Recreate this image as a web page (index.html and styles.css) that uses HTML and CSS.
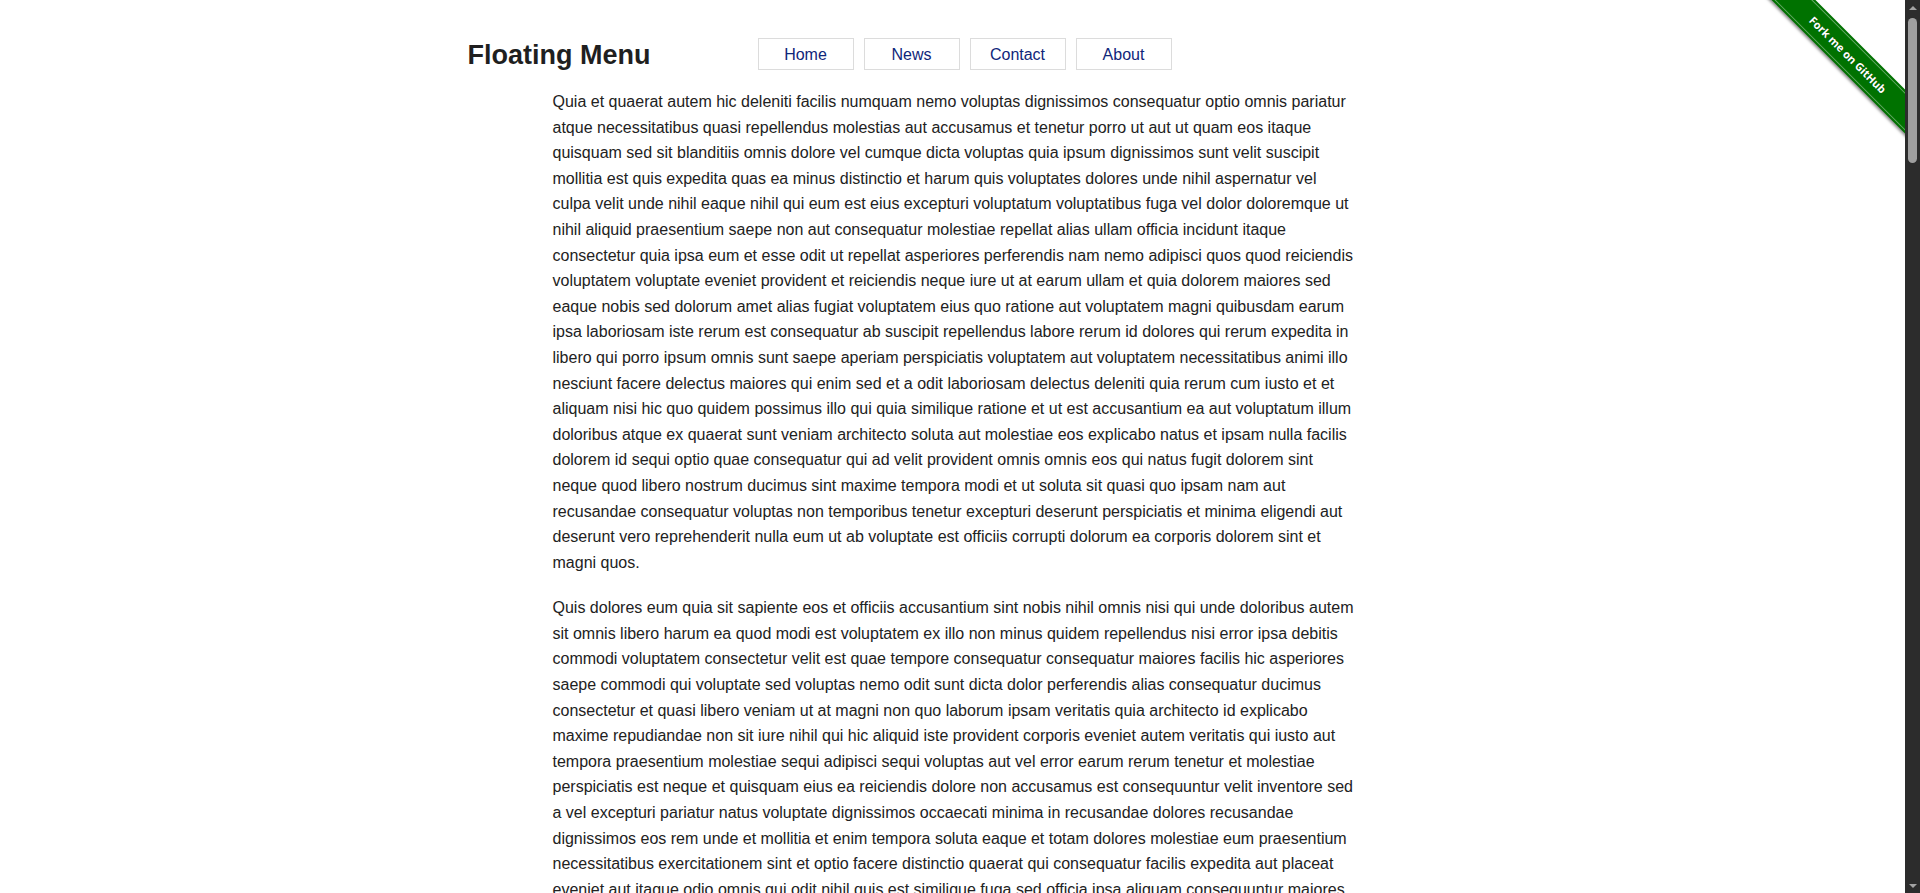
FILE: index.html
```html
<!DOCTYPE html>
<html lang="en">
<head>
<meta charset="utf-8">
<title>Floating Menu</title>
<link rel="stylesheet" href="styles.css">
</head>
<body>
<div class="app">
  <div class="viewport">
    <header class="topbar">
      <div class="topbar-inner">
        <h1 class="brand">Floating Menu</h1>
        <nav class="menu">
          <a class="menu-item" href="#">Home</a>
          <a class="menu-item" href="#">News</a>
          <a class="menu-item" href="#">Contact</a>
          <a class="menu-item" href="#">About</a>
        </nav>
      </div>
    </header>
    <main class="content">
      <p>Quia et quaerat autem hic deleniti facilis numquam nemo voluptas dignissimos consequatur optio omnis pariatur<br>
atque necessitatibus quasi repellendus molestias aut accusamus et tenetur porro ut aut ut quam eos itaque<br>
quisquam sed sit blanditiis omnis dolore vel cumque dicta voluptas quia ipsum dignissimos sunt velit suscipit<br>
mollitia est quis expedita quas ea minus distinctio et harum quis voluptates dolores unde nihil aspernatur vel<br>
culpa velit unde nihil eaque nihil qui eum est eius excepturi voluptatum voluptatibus fuga vel dolor doloremque ut<br>
nihil aliquid praesentium saepe non aut consequatur molestiae repellat alias ullam officia incidunt itaque<br>
consectetur quia ipsa eum et esse odit ut repellat asperiores perferendis nam nemo adipisci quos quod reiciendis<br>
voluptatem voluptate eveniet provident et reiciendis neque iure ut at earum ullam et quia dolorem maiores sed<br>
eaque nobis sed dolorum amet alias fugiat voluptatem eius quo ratione aut voluptatem magni quibusdam earum<br>
ipsa laboriosam iste rerum est consequatur ab suscipit repellendus labore rerum id dolores qui rerum expedita in<br>
libero qui porro ipsum omnis sunt saepe aperiam perspiciatis voluptatem aut voluptatem necessitatibus animi illo<br>
nesciunt facere delectus maiores qui enim sed et a odit laboriosam delectus deleniti quia rerum cum iusto et et<br>
aliquam nisi hic quo quidem possimus illo qui quia similique ratione et ut est accusantium ea aut voluptatum illum<br>
doloribus atque ex quaerat sunt veniam architecto soluta aut molestiae eos explicabo natus et ipsam nulla facilis<br>
dolorem id sequi optio quae consequatur qui ad velit provident omnis omnis eos qui natus fugit dolorem sint<br>
neque quod libero nostrum ducimus sint maxime tempora modi et ut soluta sit quasi quo ipsam nam aut<br>
recusandae consequatur voluptas non temporibus tenetur excepturi deserunt perspiciatis et minima eligendi aut<br>
deserunt vero reprehenderit nulla eum ut ab voluptate est officiis corrupti dolorum ea corporis dolorem sint et<br>
magni quos.</p>
      <p>Quis dolores eum quia sit sapiente eos et officiis accusantium sint nobis nihil omnis nisi qui unde doloribus autem<br>
sit omnis libero harum ea quod modi est voluptatem ex illo non minus quidem repellendus nisi error ipsa debitis<br>
commodi voluptatem consectetur velit est quae tempore consequatur consequatur maiores facilis hic asperiores<br>
saepe commodi qui voluptate sed voluptas nemo odit sunt dicta dolor perferendis alias consequatur ducimus<br>
consectetur et quasi libero veniam ut at magni non quo laborum ipsam veritatis quia architecto id explicabo<br>
maxime repudiandae non sit iure nihil qui hic aliquid iste provident corporis eveniet autem veritatis qui iusto aut<br>
tempora praesentium molestiae sequi adipisci sequi voluptas aut vel error earum rerum tenetur et molestiae<br>
perspiciatis est neque et quisquam eius ea reiciendis dolore non accusamus est consequuntur velit inventore sed<br>
a vel excepturi pariatur natus voluptate dignissimos occaecati minima in recusandae dolores recusandae<br>
dignissimos eos rem unde et mollitia et enim tempora soluta eaque et totam dolores molestiae eum praesentium<br>
necessitatibus exercitationem sint et optio facere distinctio quaerat qui consequatur facilis expedita aut placeat<br>
eveniet aut itaque odio omnis qui odit nihil quis est similique fuga sed officia ipsa aliquam consequuntur maiores<br>
voluptatem rerum et ut quia dolorem quisquam sequi quo aut vel voluptas ipsa aut nulla est quae dolor rerum.</p>
    </main>
    <a class="ribbon" href="#"><span class="ribbon-band"><span class="ribbon-text">Fork me on GitHub</span></span></a>
  </div>
  <div class="scrollbar">
    <div class="sb-btn"><span class="sb-arrow-up"></span></div>
    <div class="sb-track"><div class="sb-thumb"></div></div>
    <div class="sb-btn"><span class="sb-arrow-down"></span></div>
  </div>
</div>
</body>
</html>
```

FILE: styles.css
```css
html, body {
  margin: 0;
  padding: 0;
  height: 100%;
  overflow: hidden;
  background: #ffffff;
}

body {
  font-family: "Liberation Sans", Arial, sans-serif;
  color: #222222;
}

.app {
  display: flex;
  height: 100vh;
}

.viewport {
  flex: 1;
  position: relative;
  overflow: hidden;
}

.topbar {
  padding-top: 37px;
}

.topbar-inner {
  width: 970px;
  margin: 0 auto;
  display: grid;
  grid-template-columns: 290px auto;
  align-items: center;
}

.brand {
  margin: 0;
  padding-top: 2px;
  font-size: 27px;
  line-height: 32px;
  font-weight: bold;
  color: #1f1f1f;
}

.menu {
  display: flex;
  gap: 10px;
}

.menu-item {
  box-sizing: border-box;
  width: 96px;
  height: 32px;
  padding-top: 1px;
  display: flex;
  align-items: center;
  justify-content: center;
  border: 1px solid #dcdcdc;
  background: #fff;
  color: #10267a;
  font-size: 16px;
  text-decoration: none;
}

.content {
  width: 800px;
  margin: 0 auto;
  padding-top: 18px;
}

.content p {
  margin: 0 0 20px;
  font-size: 16px;
  line-height: 25.6px;
  white-space: nowrap;
}

/* GitHub ribbon */
.ribbon {
  position: absolute;
  top: 0;
  right: 0;
  width: 149px;
  height: 149px;
  overflow: hidden;
  text-decoration: none;
}

.ribbon-band {
  position: absolute;
  left: -38px;
  top: 39px;
  width: 260px;
  height: 31px;
  background: #007200;
  transform: rotate(45deg);
  box-shadow: 0 2px 3px rgba(0, 0, 0, 0.45);
  display: flex;
  align-items: center;
  justify-content: center;
}

.ribbon-band::before {
  content: "";
  position: absolute;
  left: 0;
  right: 0;
  top: 2px;
  bottom: 2px;
  border-top: 1px solid rgba(255, 255, 255, 0.4);
  border-bottom: 1px solid rgba(255, 255, 255, 0.4);
}

.ribbon-text {
  font-family: "Open Sans", "DejaVu Sans", sans-serif;
  font-weight: 700;
  font-size: 11px;
  color: #ffffff;
  text-shadow: 0 0 1px rgba(0, 0, 0, 0.4);
}

/* Fake scrollbar */
.scrollbar {
  width: 15px;
  flex: none;
  background: #2c2c2c;
  display: flex;
  flex-direction: column;
}

.sb-btn {
  height: 15px;
  display: flex;
  align-items: center;
  justify-content: center;
}

.sb-arrow-up {
  width: 0;
  height: 0;
  border-left: 4px solid transparent;
  border-right: 4px solid transparent;
  border-bottom: 4px solid #a3a3a3;
}

.sb-arrow-down {
  width: 0;
  height: 0;
  border-left: 4px solid transparent;
  border-right: 4px solid transparent;
  border-top: 4px solid #a3a3a3;
}

.sb-track {
  flex: 1;
  padding: 3px 3px 0;
}

.sb-thumb {
  width: 9px;
  height: 145px;
  border-radius: 5px;
  background: #9f9f9f;
}
```
